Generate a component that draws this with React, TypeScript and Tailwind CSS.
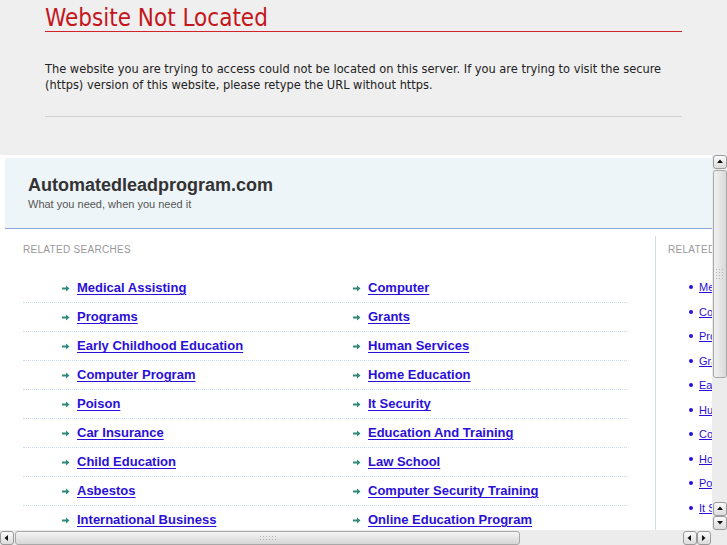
import React from 'react';

const LEFT = [
  'Medical Assisting',
  'Programs',
  'Early Childhood Education',
  'Computer Program',
  'Poison',
  'Car Insurance',
  'Child Education',
  'Asbestos',
  'International Business',
];

const RIGHT = [
  'Computer',
  'Grants',
  'Human Services',
  'Home Education',
  'It Security',
  'Education And Training',
  'Law School',
  'Computer Security Training',
  'Online Education Program',
];

const SIDE = [
  'Medical Assisting',
  'Computer',
  'Programs',
  'Grants',
  'Early Childhood Education',
  'Human Services',
  'Computer Program',
  'Home Education',
  'Poison',
  'It Security',
];

const Arrow = () => (
  <svg width="8" height="7" viewBox="0 0 8 7" className="shrink-0">
    <path d="M0 2.5h4V0.5L7.5 3.5 4 6.5V4.5H0z" fill="#2f8a7c" />
  </svg>
);

const Tri = ({ dir }: { dir: 'up' | 'down' | 'left' | 'right' }) => {
  const d = {
    up: 'M1 5L4 1.5 7 5z',
    down: 'M1 2L4 5.5 7 2z',
    left: 'M5 1L1.5 4 5 7z',
    right: 'M2 1L5.5 4 2 7z',
  }[dir];
  return (
    <svg width="8" height="8" viewBox="0 0 8 8">
      <path d={d} fill="#111" />
    </svg>
  );
};

const SBtn = ({ dir }: { dir: 'up' | 'down' | 'left' | 'right' }) => (
  <div className="w-[14px] h-[14px] rounded-[3px] border border-[#9a9a9a] bg-gradient-to-b from-[#fbfbfb] to-[#dcdcdc] flex items-center justify-center">
    <Tri dir={dir} />
  </div>
);

const Grip = ({ vertical }: { vertical?: boolean }) => (
  <div className={`grid gap-[2px] ${vertical ? 'grid-cols-3' : 'grid-cols-6'}`}>
    {Array.from({ length: 12 }).map((_, i) => (
      <div key={i} className="w-[1px] h-[1px] bg-[#b5b5b5]" />
    ))}
  </div>
);

export default function App() {
  return (
    <div className="w-[727px] h-[545px] overflow-hidden bg-[#efefef] flex flex-col">
      {/* error notice */}
      <div className="h-[155px] shrink-0 px-[45px] pt-[5px] font-['DejaVu_Sans_Condensed','DejaVu_Sans',sans-serif]">
        <div className="w-[637px]">
          <h1 className="text-[24px] leading-[26px] text-[#c4161c] border-b border-[#d2232a]">
            Website Not Located
          </h1>
          <p className="mt-[29px] text-[12.7px] leading-[16px] text-[#222]">
            The website you are trying to access could not be located on this server. If you are trying to visit the secure (https) version of this website, please retype the URL without https.
          </p>
          <div className="mt-[23px] border-b border-[#cfcfcf]" />
        </div>
      </div>

      {/* framed parked page */}
      <div className="flex-1 flex flex-col bg-white min-h-0">
        <div className="flex-1 flex min-h-0">
          <div className="flex-1 overflow-hidden pl-[5px] pt-[3px] font-['Liberation_Sans',Arial,sans-serif]">
            <div className="w-[707px] h-[71px] bg-[#eef5f8] border-b border-[#8ba6dc] pl-[23px] pt-[17px]">
              <div className="text-[18px] leading-[21px] font-bold text-[#333]">Automatedleadprogram.com</div>
              <div className="mt-[2px] text-[11px] leading-[13px] text-[#555]">What you need, when you need it</div>
            </div>
            <div className="flex">
              <div className="w-[650px] shrink-0 pl-[18px] pr-[28px]">
                <div className="pt-[15px] text-[10px] leading-[12px] tracking-[0.3px] text-[#999]">RELATED SEARCHES</div>
                <div className="mt-[18px]">
                  {LEFT.map((l, i) => (
                    <div key={l} className="flex h-[29px] items-center border-b border-dotted border-[#c9d8ec]">
                      <div className="w-[291px] flex items-center pl-[39px] gap-[7px]">
                        <Arrow />
                        <a href="#" className="text-[13px] font-bold text-[#2a0fd8] underline underline-offset-[2px]">{l}</a>
                      </div>
                      <div className="flex items-center pl-[39px] gap-[7px]">
                        <Arrow />
                        <a href="#" className="text-[13px] font-bold text-[#2a0fd8] underline underline-offset-[2px]">{RIGHT[i]}</a>
                      </div>
                    </div>
                  ))}
                </div>
              </div>
              <div className="mt-[7px] border-l border-[#cfdcf0] pl-[12px] w-[200px] shrink-0">
                <div className="pt-[8px] text-[10px] leading-[12px] tracking-[0.3px] text-[#999]">RELATED SEARCHES</div>
                <div className="mt-[19px] pl-[21px]">
                  {SIDE.map((s) => (
                    <div key={s} className="h-[24.5px] flex items-center gap-[6px] whitespace-nowrap">
                      <span className="w-[4px] h-[4px] rounded-full bg-[#2a0fd8] shrink-0" />
                      <a href="#" className="text-[11px] text-[#2a0fd8] underline">{s}</a>
                    </div>
                  ))}
                </div>
              </div>
            </div>
          </div>
          {/* vertical scrollbar */}
          <div className="w-[15px] shrink-0 bg-[#ececec] flex flex-col items-center">
            <SBtn dir="up" />
            <div className="mt-[1px] w-[14px] h-[208px] rounded-[3px] border border-[#a8a8a8] bg-gradient-to-r from-[#f2f2f2] to-[#d9d9d9] flex items-center justify-center">
              <Grip vertical />
            </div>
            <div className="flex-1" />
            <SBtn dir="up" />
            <SBtn dir="down" />
          </div>
        </div>
        {/* horizontal scrollbar */}
        <div className="h-[15px] shrink-0 bg-[#ececec] flex items-center">
          <SBtn dir="left" />
          <div className="ml-[1px] w-[505px] h-[14px] rounded-[3px] border border-[#a8a8a8] bg-gradient-to-b from-[#f5f5f5] to-[#d6d6d6] flex items-center justify-center">
            <Grip />
          </div>
          <div className="flex-1" />
          <SBtn dir="left" />
          <SBtn dir="right" />
          <div className="w-[16px] h-[15px] bg-[#ececec]" />
        </div>
      </div>
    </div>
  );
}
